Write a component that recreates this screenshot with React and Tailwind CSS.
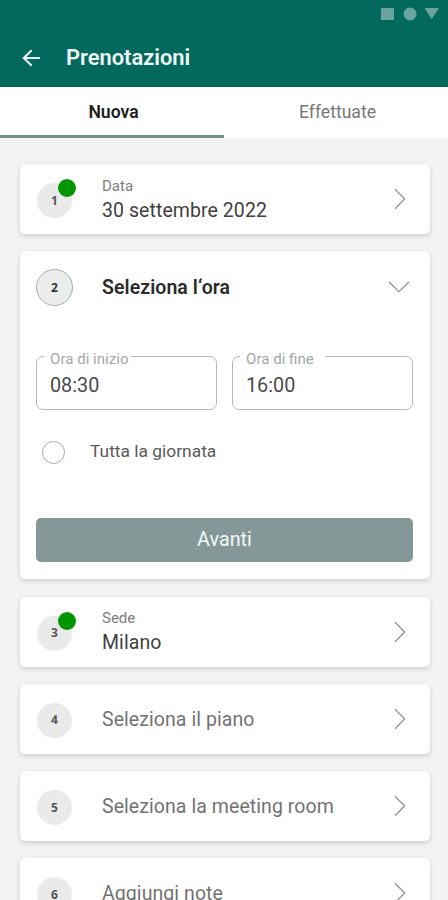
function Chevron({ down }) {
  return (
    <svg
      className={down ? "h-3 w-[22px] shrink-0 -mr-px" : "mr-[3px] h-[22px] w-3 shrink-0"}
      viewBox={down ? "0 0 22 12" : "0 0 12 22"}
      fill="none"
      stroke="#929292"
      strokeWidth="1.3"
    >
      <path d={down ? "M1 1L11 10.7L21 1" : "M1 1.3L10.7 11L1 20.7"} />
    </svg>
  );
}

function Step({ n, done, active }) {
  return (
    <div
      className={
        "relative flex shrink-0 items-center justify-center rounded-full font-['Open_Sans',sans-serif] text-[12px] font-bold " +
        (active
          ? "h-[37px] w-[37px] border border-[#a9abab] bg-[#ebecec] pt-px text-[#333]"
          : "h-[35px] w-[35px] bg-[#eaeaea] text-[#585858]")
      }
    >
      {n}
      {done && <span className="absolute -right-1 -top-1 h-[18px] w-[18px] rounded-full bg-[#029702]" />}
    </div>
  );
}

const cardShadow = "rounded-[5px] bg-white shadow-[0_2px_5px_rgba(0,0,0,0.16)]";

function Row({ n, label, text }) {
  return (
    <div className={"flex h-[70px] shrink-0 items-center pl-[17px] pr-[21px] " + cardShadow}>
      <div className="pt-[3px]">
        <Step n={n} done={!!label} />
      </div>
      <div className="ml-[30px] flex-1">
        {label && <div className="text-[15px] leading-[22px] text-[#7c7c7c]">{label}</div>}
        <div
          className={
            "whitespace-nowrap text-[19.5px] leading-[27px] tracking-[0.07px] " +
            (label ? "text-[#3f3f3f]" : "pt-px text-[#737373]")
          }
        >
          {text}
        </div>
      </div>
      <Chevron />
    </div>
  );
}

function Field({ label, value, gap }) {
  return (
    <fieldset className="h-[59px] w-[181px] rounded-[7px] border-[1.5px] border-[#b3baba] px-[7px]">
      <legend className={"h-[11px] whitespace-nowrap pl-[6px] text-[15.1px] leading-[16px] text-[#a3a8a8] " + gap}>
        {label}
      </legend>
      <div className="pl-[6px] pt-[11px] text-[19.8px] leading-[26px] text-[#4a4a4a]">{value}</div>
    </fieldset>
  );
}

export default function App() {
  return (
    <div className="flex h-[900px] w-[448px] flex-col overflow-hidden bg-[#f3f3f3] font-[Roboto,sans-serif]">
      <header className="flex h-[87px] shrink-0 flex-col bg-[#04695d]">
        <div className="flex h-7 shrink-0 items-center justify-end pr-[9px]">
          <svg className="h-3.5 w-[58px]" viewBox="0 0 58 14" fill="#68a59e">
            <rect x="0" y="1" width="13" height="12" />
            <circle cx="29" cy="7" r="6.5" />
            <path d="M43.5 1H58L50.7 12Z" />
          </svg>
        </div>
        <div className="flex h-[59px] items-center pl-[22px]">
          <svg className="h-[18px] w-[19px]" viewBox="0 0 19 18" fill="none" stroke="#e8f3f1" strokeWidth="2.1">
            <path d="M18 9H2M9.7 1.2L1.8 9L9.7 16.8" />
          </svg>
          <h1 className="ml-[25px] text-[21.9px] font-semibold leading-[30px] text-[#eef8f6]">Prenotazioni</h1>
        </div>
      </header>
      <nav className="flex h-[51px] shrink-0 bg-white text-center text-[17.6px] leading-[51px]">
        <div className="h-[51px] w-1/2 border-b-[3px] border-[#71908c] font-semibold text-[#1d1d1d]">
          <span className="pl-[3px]">Nuova</span>
        </div>
        <div className="w-1/2 text-[#777]">
          <span className="pl-[3px]">Effettuate</span>
        </div>
      </nav>
      <main className="flex flex-col gap-[17.3px] pl-5 pr-[18px] pt-[26px]">
        <Row n="1" label="Data" text="30 settembre 2022" />
        <section className={"flex h-[328px] shrink-0 flex-col pl-4 pr-[17px] " + cardShadow}>
          <div className="flex h-[72px] items-center pr-[4px]">
            <Step n="2" active />
            <h2 className="ml-[29px] flex-1 text-[19.5px] font-semibold tracking-[0.07px] text-[#2b2b2b]">
              Seleziona l‘ora
            </h2>
            <Chevron down />
          </div>
          <div className="flex justify-between pt-[28px]">
            <Field label="Ora di inizio" value="08:30" gap="pr-0.5" />
            <Field label="Ora di fine" value="16:00" gap="pr-3" />
          </div>
          <div className="flex h-[54px] items-end pl-[6px]">
            <span className="h-[23px] w-[23px] rounded-full border-[1.5px] border-[#aaa]" />
            <span className="ml-[25px] text-[17.4px] leading-[26px] text-[#5a5a5a]">Tutta la giornata</span>
          </div>
          <button className="mt-[54px] h-11 shrink-0 rounded-[5px] bg-[#839897] text-[19.8px] text-[#f2f8f7]">
            Avanti
          </button>
        </section>
        <Row n="3" label="Sede" text="Milano" />
        <Row n="4" text="Seleziona il piano" />
        <Row n="5" text="Seleziona la meeting room" />
        <Row n="6" text="Aggiungi note" />
      </main>
    </div>
  );
}
